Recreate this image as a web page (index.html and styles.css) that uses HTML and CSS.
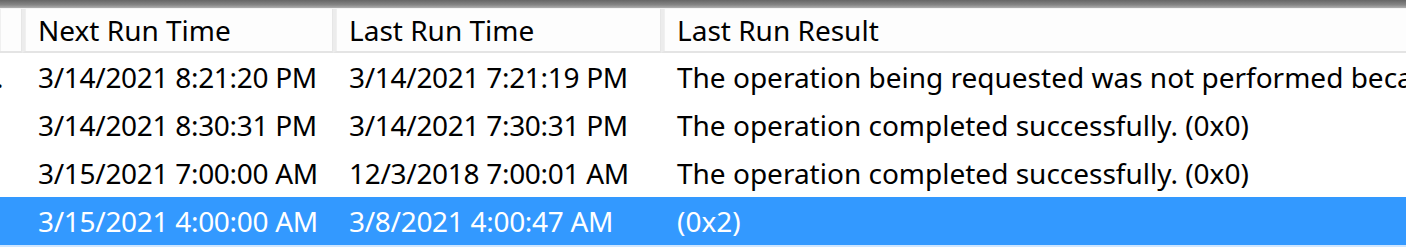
FILE: index.html
```html
<!DOCTYPE html>
<html>
<head>
<meta charset="utf-8">
<link rel="stylesheet" href="styles.css">
</head>
<body>
<div class="list">
  <div class="topbar"></div>
  <div class="row header">
    <div class="cell hcell c0"></div>
    <div class="cell hcell c1">Next Run Time</div>
    <div class="cell hcell c2">Last Run Time</div>
    <div class="cell hcell c3">Last Run Result</div>
  </div>
  <div class="row">
    <div class="cell c0 trunc">.</div>
    <div class="cell c1 date">3/14/2021 8:21:20 PM</div>
    <div class="cell c2 date">3/14/2021 7:21:19 PM</div>
    <div class="cell c3">The operation being requested was not performed because the user has not logged on to the network. (0x800704DD)</div>
  </div>
  <div class="row">
    <div class="cell c0"></div>
    <div class="cell c1 date">3/14/2021 8:30:31 PM</div>
    <div class="cell c2 date">3/14/2021 7:30:31 PM</div>
    <div class="cell c3">The operation completed successfully. (0x0)</div>
  </div>
  <div class="row">
    <div class="cell c0"></div>
    <div class="cell c1 date">3/15/2021 7:00:00 AM</div>
    <div class="cell c2 date">12/3/2018 7:00:01 AM</div>
    <div class="cell c3">The operation completed successfully. (0x0)</div>
  </div>
  <div class="row selected">
    <div class="cell c0"></div>
    <div class="cell c1 date">3/15/2021 4:00:00 AM</div>
    <div class="cell c2 date">3/8/2021 4:00:47 AM</div>
    <div class="cell c3">(0x2)</div>
  </div>
</div>
</body>
</html>
```

FILE: styles.css
```css
html, body {
  margin: 0;
  padding: 0;
  background: #ffffff;
  overflow: hidden;
}

.list {
  width: 1406px;
  font-family: "Noto Sans", "Open Sans", sans-serif;
  font-size: 28px;
  color: #000;
}

.topbar {
  height: 8px;
  background: linear-gradient(#666666, #858585 60%, #b0b0b0);
}

.row {
  display: grid;
  grid-template-columns: 22px 311px 328px 1fr;
  height: 48px;
  align-items: center;
  white-space: nowrap;
}

.header {
  height: 45px;
  background: #fdfdfd;
  border-top: 1px solid #f4f4f4;
  box-sizing: border-box;
  align-items: stretch;
}

.cell {
  overflow: hidden;
  padding-left: 16px;
  line-height: 48px;
}

.date {
  letter-spacing: -0.3px;
}

.c0 {
  padding-left: 0;
}

.trunc {
  padding-left: 0;
  text-indent: -4px;
}

.hcell {
  line-height: 42px;
  padding-left: 13px;
  border-bottom: 2px solid #e4e4e4;
  border-right: 1px solid #e6e6e6;
  box-shadow: inset 1px 0 0 #f0f0f0;
}

.hcell.c0 {
  padding-left: 0;
}

.hcell.c1, .hcell.c2, .hcell.c3 {
  border-left: 3px solid #ececec;
}

.hcell.c3 {
  border-right: none;
}

.selected {
  background: #3399ff;
  color: #ffffff;
  border-bottom: 2px solid #cfe6ff;
  height: 50px;
  box-sizing: border-box;
}
```
